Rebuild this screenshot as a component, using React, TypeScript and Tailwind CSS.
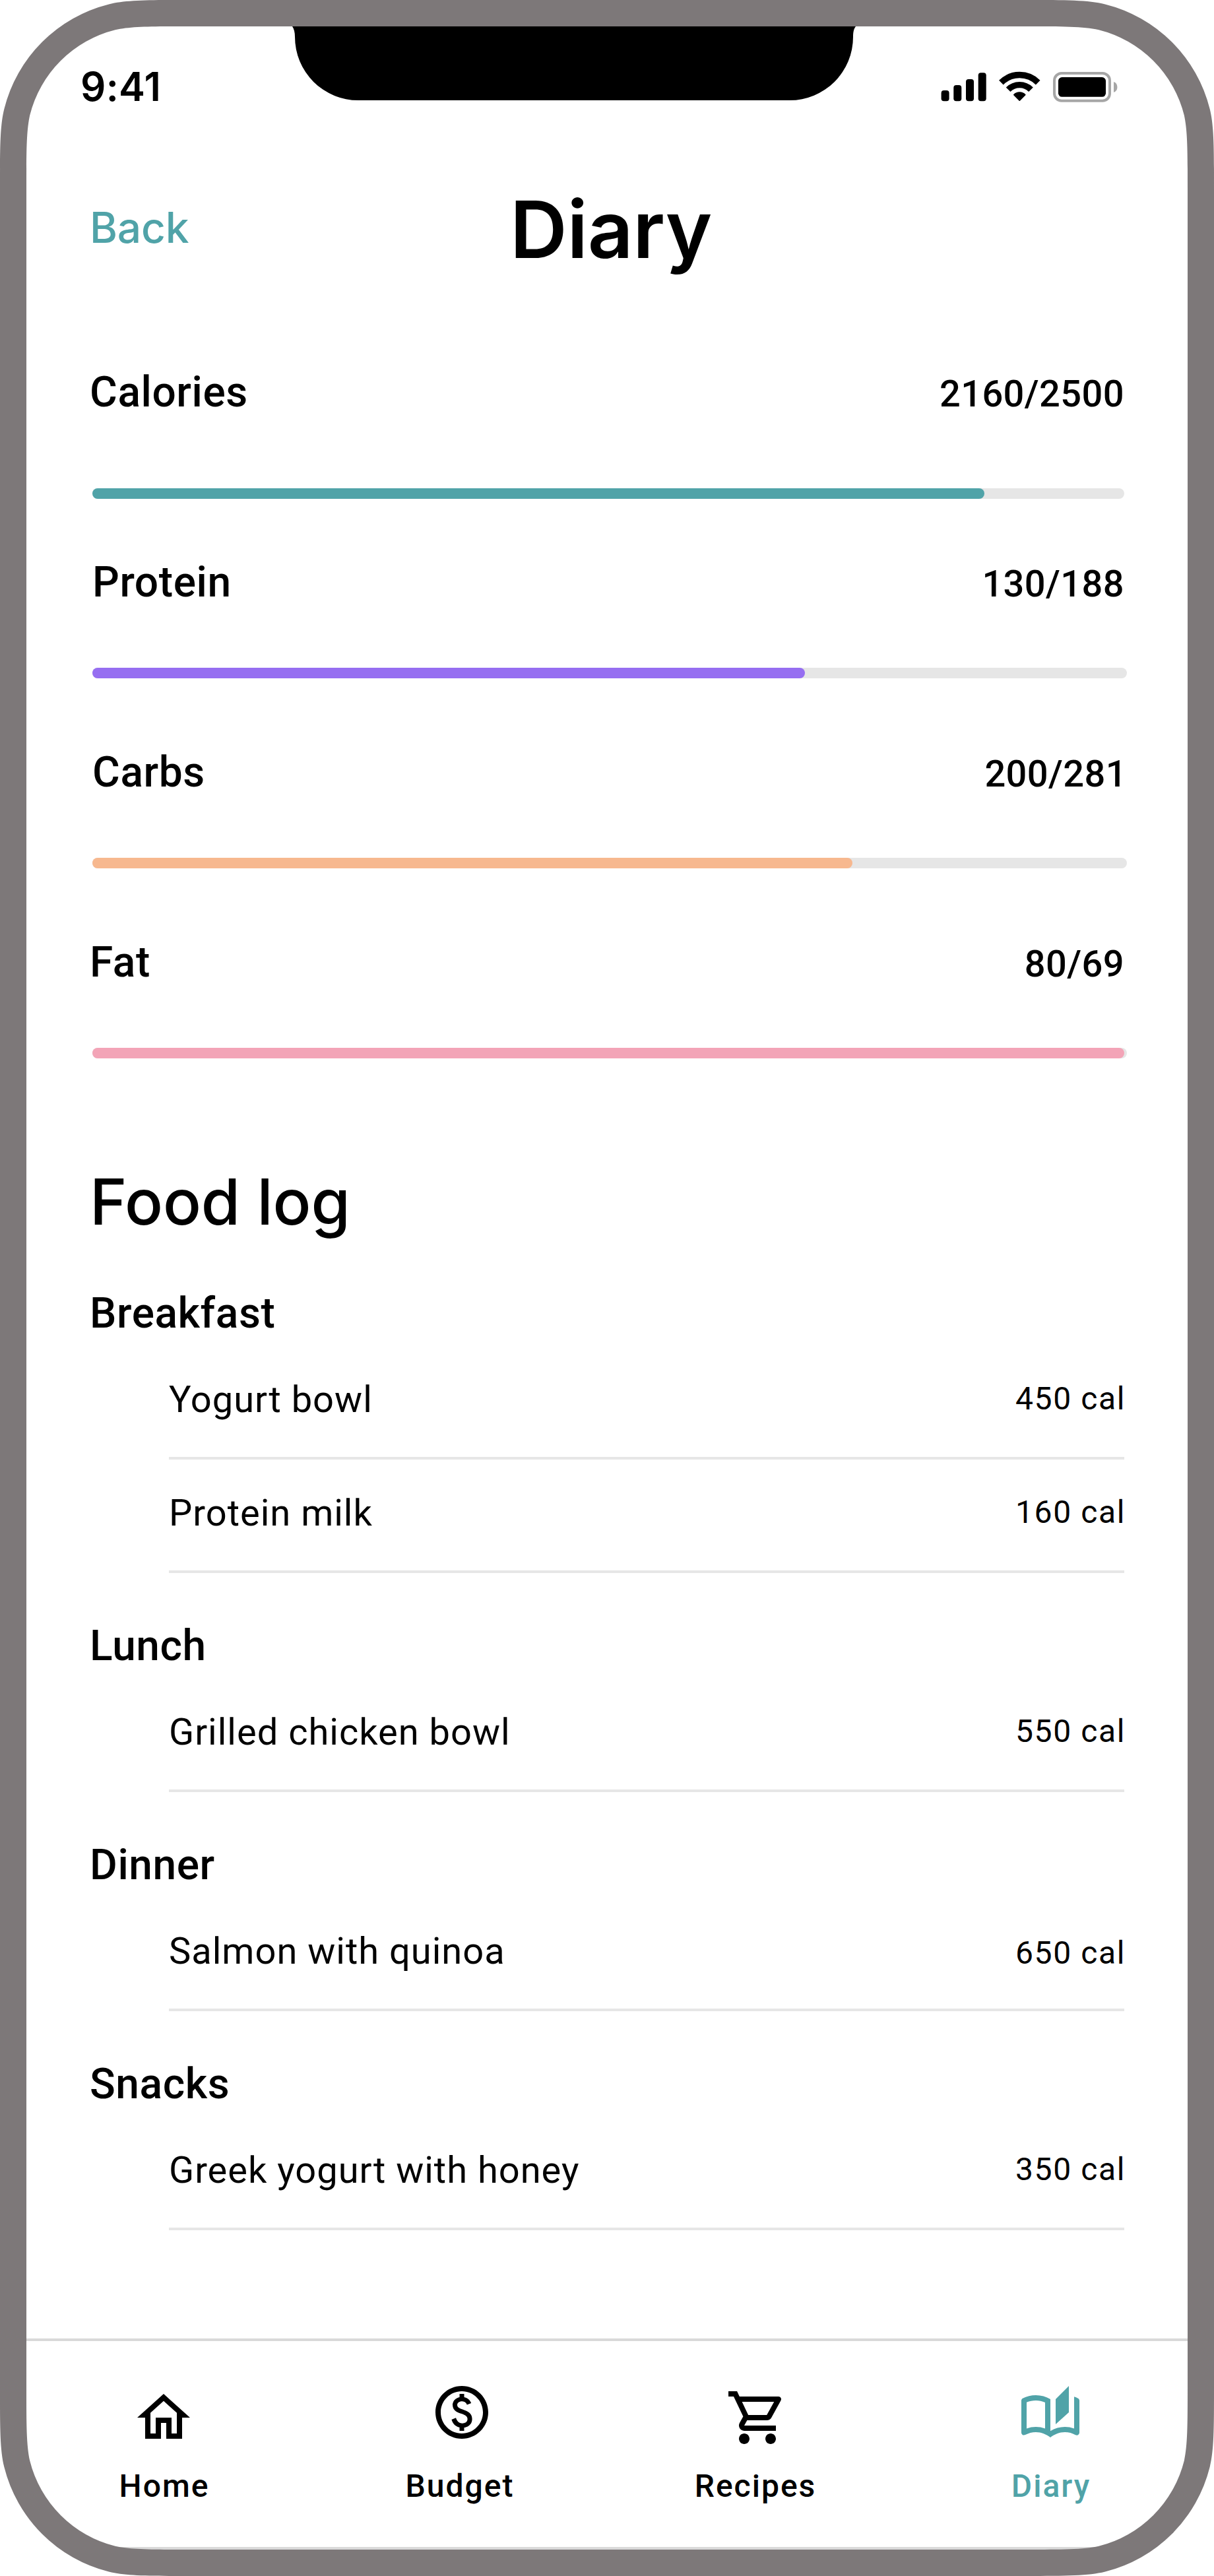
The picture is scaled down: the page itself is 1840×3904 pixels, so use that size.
import { MdOutlineAutoStories, MdOutlineHome, MdOutlinePaid, MdOutlineShoppingCart } from 'react-icons/md'
import type { IconType } from 'react-icons'

type Macro = {
  name: string
  value: string
  fill: number
  labelClass: string
  trackClass: string
  fillClass: string
}

const macros: Macro[] = [
  { name: 'Calories', value: '2160/2500', fill: 1352, labelClass: 'pl-[136px] pr-[136px]', trackClass: 'mt-[97px] w-[1564px]', fillClass: 'bg-[#50a3a8]' },
  { name: 'Protein', value: '130/188', fill: 1080, labelClass: 'pl-[140px] pr-[136px]', trackClass: 'mt-[81px] w-[1568px]', fillClass: 'bg-[#966ef1]' },
  { name: 'Carbs', value: '200/281', fill: 1152, labelClass: 'pl-[140px] pr-[132px]', trackClass: 'mt-[81px] w-[1568px]', fillClass: 'bg-[#f7b88f]' },
  { name: 'Fat', value: '80/69', fill: 1564, labelClass: 'pl-[136px] pr-[136px]', trackClass: 'mt-[81px] w-[1568px]', fillClass: 'bg-[#f3a4b7]' },
]

type Food = { name: string; cal: string; calClass: string }

const meals: { title: string; foods: Food[] }[] = [
  {
    title: 'Breakfast',
    foods: [
      { name: 'Yogurt bowl', cal: '450 cal', calClass: '-mt-px' },
      { name: 'Protein milk', cal: '160 cal', calClass: '-mt-px' },
    ],
  },
  { title: 'Lunch', foods: [{ name: 'Grilled chicken bowl', cal: '550 cal', calClass: '-mt-px' }] },
  { title: 'Dinner', foods: [{ name: 'Salmon with quinoa', cal: '650 cal', calClass: 'mt-[3px]' }] },
  { title: 'Snacks', foods: [{ name: 'Greek yogurt with honey', cal: '350 cal', calClass: '-mt-px' }] },
]

const tabs: { name: string; Icon: IconType; iconClass: string; colorClass: string }[] = [
  { name: 'Home', Icon: MdOutlineHome, iconClass: 'mt-2 -translate-x-px', colorClass: 'text-black' },
  { name: 'Budget', Icon: MdOutlinePaid, iconClass: 'translate-x-[3px]', colorClass: 'text-black' },
  { name: 'Recipes', Icon: MdOutlineShoppingCart, iconClass: 'mt-2 translate-x-[3px]', colorClass: 'text-black' },
  { name: 'Diary', Icon: MdOutlineAutoStories, iconClass: 'mt-[6px] -translate-x-px', colorClass: 'text-[#50a3a8]' },
]

/* Phone bezel with continuous-curvature corners, plus the camera notch. */
function Bezel() {
  return (
    <svg className="pointer-events-none absolute inset-0" width="1840" height="3904" viewBox="0 0 1840 3904" aria-hidden="true">
      <path
        fill="#7d7879"
        fillRule="evenodd"
        d="M286 0H1554C1617 0 1649 0 1675 6.4A218 218 0 0 1 1833.6 165C1840 191 1840 223 1840 286V3618C1840 3681 1840 3713 1833.6 3739A218 218 0 0 1 1675 3897.6C1649 3904 1617 3904 1554 3904H286C223 3904 191 3904 165 3897.6A218 218 0 0 1 6.4 3739C0 3713 0 3681 0 3618V286C0 223 0 191 6.4 165A218 218 0 0 1 165 6.4C191 0 223 0 286 0Z
           M286 40C229 40 199 40 174.7 45.2A178 178 0 0 0 45.2 174.7C40 199 40 229 40 286V3618C40 3675 40 3705 45.2 3729.3A178 178 0 0 0 174.7 3858.8C199 3864 229 3864 286 3864H1554C1611 3864 1641 3864 1665.3 3858.8A178 178 0 0 0 1794.8 3729.3C1800 3705 1800 3675 1800 3618V286C1800 229 1800 199 1794.8 174.7A178 178 0 0 0 1665.3 45.2C1641 40 1611 40 1554 40Z"
      />
      <path d="M443 40C445.6 43.5 447 49 447 56A96 96 0 0 0 543 152H1197A96 96 0 0 0 1293 56C1293 49 1294 43.5 1297 40Z" />
    </svg>
  )
}

function StatusIcons() {
  return (
    <svg className="mt-[17px]" width="270" height="48" viewBox="1426 108 270 48" aria-hidden="true">
      <rect x="1426.6" y="137" width="12" height="16.3" rx="4" />
      <rect x="1445.3" y="129" width="12" height="24.3" rx="4" />
      <rect x="1464" y="120" width="12" height="33.3" rx="4" />
      <rect x="1482.7" y="110.2" width="12" height="43.1" rx="4" />
      <g fill="none" stroke="#000" strokeWidth="9.4">
        <path d="M1517.4 125.1A39.5 39.5 0 0 1 1573.2 125.1" />
        <path d="M1528.1 135.8A24.3 24.3 0 0 1 1562.5 135.8" />
      </g>
      <path d="M1545.3 152L1536.9 143.6A12 12 0 0 1 1553.7 143.6Z" stroke="#000" strokeWidth="1.8" strokeLinejoin="round" />
      <rect x="1598" y="111" width="84" height="41.7" rx="11" fill="none" stroke="#a6a6a6" strokeWidth="4" />
      <rect x="1604" y="117" width="72" height="29.8" rx="5.6" />
      <path d="M1688 124V140A8.6 8.6 0 0 0 1688 124Z" fill="#a6a6a6" />
    </svg>
  )
}

function MacroRow({ macro }: { macro: Macro }) {
  return (
    <div className="h-[288px]">
      <div className={`flex items-baseline justify-between font-medium ${macro.labelClass}`}>
        <span className="text-[64px] leading-[96px] tracking-[0.6px]">{macro.name}</span>
        <span className="text-[56px] leading-[80px] tracking-[0.4px]">{macro.value}</span>
      </div>
      <div className={`ml-[140px] h-4 rounded-full bg-[#e6e6e6] ${macro.trackClass}`}>
        <div className={`h-4 rounded-full ${macro.fillClass}`} style={{ width: macro.fill }} />
      </div>
    </div>
  )
}

export default function App() {
  return (
    <div className="relative flex h-[3904px] w-[1840px] flex-col bg-white font-['Roboto',sans-serif] text-black">
      <div className="flex h-[268px] items-start justify-between pt-[91px] pr-[144px] pl-[122px]">
        <span className="font-['Inter',sans-serif] text-[60px] leading-[80px] font-semibold tracking-[0.3px] [font-feature-settings:'calt'_0]">9:41</span>
        <StatusIcons />
      </div>

      <header className="flex h-[160px] items-start pl-[136px] font-['Inter',sans-serif]">
        <a className="mt-[29px] w-[160px] text-[64px] leading-[96px] font-medium tracking-[-0.2px] text-[#50a3a8]">Back</a>
        <h1 className="ml-[477px] text-[120px] leading-[160px] font-semibold tracking-[-0.2px]">Diary</h1>
      </header>

      <section className="mt-[119px]">
        {macros.map((m) => (
          <MacroRow key={m.name} macro={m} />
        ))}
      </section>

      <section className="pr-[136px] pl-[136px]">
        <h2 className="mt-[58px] font-['Inter',sans-serif] text-[96px] leading-[128px] font-medium tracking-[-0.1px]">Food log</h2>
        <div className="mt-[58px] flex flex-col gap-[63px]">
          {meals.map((meal) => (
            <div key={meal.title}>
              <h3 className="mb-px text-[64px] leading-[96px] font-medium tracking-[0.6px]">{meal.title}</h3>
              {meal.foods.map((f) => (
                <div key={f.name} className="ml-[120px] flex h-[172px] items-start justify-between border-b-4 border-[#e6e6e6] pt-[41px]">
                  <span className="text-[56px] leading-[80px] tracking-[1px]">{f.name}</span>
                  <span className={`-mr-[2px] text-[48px] leading-[80px] tracking-[1.6px] ${f.calClass}`}>{f.cal}</span>
                </div>
              ))}
            </div>
          ))}
        </div>
      </section>

      <div className="mt-auto mb-10 flex flex-col">
        <nav className="mx-10 flex h-[316px] items-start justify-between border-t-4 border-[#d9d9d9] pt-[60px] pr-[111px] pl-[113px]">
          {tabs.map(({ name, Icon, iconClass, colorClass }) => (
            <div key={name} className={`flex w-48 flex-col items-center ${colorClass}`}>
              <div className="h-[128px]">
                <Icon className={`h-24 w-24 ${iconClass}`} />
              </div>
              <span className="text-[48px] leading-[64px] font-medium tracking-[2px]">{name}</span>
            </div>
          ))}
        </nav>
        <div className="mx-[130px] h-1 bg-[#d9d9d9]" />
      </div>

      <Bezel />
    </div>
  )
}
